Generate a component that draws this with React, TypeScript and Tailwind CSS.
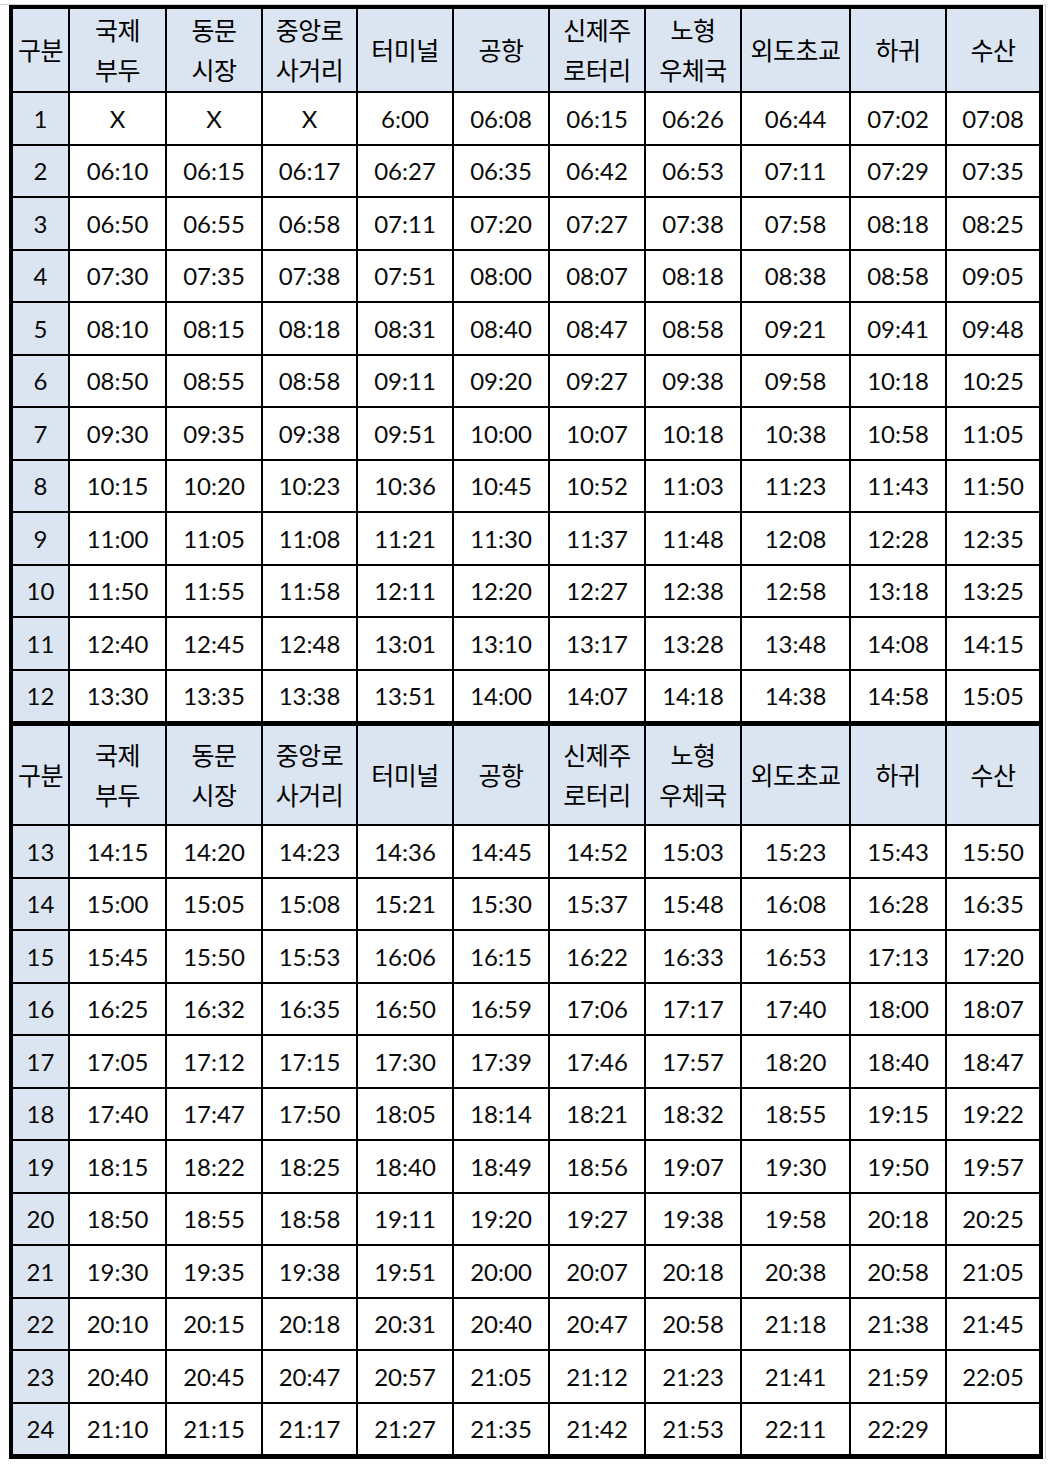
const headers: string[][] = [
  ['구분'],
  ['국제', '부두'],
  ['동문', '시장'],
  ['중앙로', '사거리'],
  ['터미널'],
  ['공항'],
  ['신제주', '로터리'],
  ['노형', '우체국'],
  ['외도초교'],
  ['하귀'],
  ['수산'],
];

const rows: string[][] = [
  ['X', 'X', 'X', '6:00', '06:08', '06:15', '06:26', '06:44', '07:02', '07:08'],
  ['06:10', '06:15', '06:17', '06:27', '06:35', '06:42', '06:53', '07:11', '07:29', '07:35'],
  ['06:50', '06:55', '06:58', '07:11', '07:20', '07:27', '07:38', '07:58', '08:18', '08:25'],
  ['07:30', '07:35', '07:38', '07:51', '08:00', '08:07', '08:18', '08:38', '08:58', '09:05'],
  ['08:10', '08:15', '08:18', '08:31', '08:40', '08:47', '08:58', '09:21', '09:41', '09:48'],
  ['08:50', '08:55', '08:58', '09:11', '09:20', '09:27', '09:38', '09:58', '10:18', '10:25'],
  ['09:30', '09:35', '09:38', '09:51', '10:00', '10:07', '10:18', '10:38', '10:58', '11:05'],
  ['10:15', '10:20', '10:23', '10:36', '10:45', '10:52', '11:03', '11:23', '11:43', '11:50'],
  ['11:00', '11:05', '11:08', '11:21', '11:30', '11:37', '11:48', '12:08', '12:28', '12:35'],
  ['11:50', '11:55', '11:58', '12:11', '12:20', '12:27', '12:38', '12:58', '13:18', '13:25'],
  ['12:40', '12:45', '12:48', '13:01', '13:10', '13:17', '13:28', '13:48', '14:08', '14:15'],
  ['13:30', '13:35', '13:38', '13:51', '14:00', '14:07', '14:18', '14:38', '14:58', '15:05'],
  ['14:15', '14:20', '14:23', '14:36', '14:45', '14:52', '15:03', '15:23', '15:43', '15:50'],
  ['15:00', '15:05', '15:08', '15:21', '15:30', '15:37', '15:48', '16:08', '16:28', '16:35'],
  ['15:45', '15:50', '15:53', '16:06', '16:15', '16:22', '16:33', '16:53', '17:13', '17:20'],
  ['16:25', '16:32', '16:35', '16:50', '16:59', '17:06', '17:17', '17:40', '18:00', '18:07'],
  ['17:05', '17:12', '17:15', '17:30', '17:39', '17:46', '17:57', '18:20', '18:40', '18:47'],
  ['17:40', '17:47', '17:50', '18:05', '18:14', '18:21', '18:32', '18:55', '19:15', '19:22'],
  ['18:15', '18:22', '18:25', '18:40', '18:49', '18:56', '19:07', '19:30', '19:50', '19:57'],
  ['18:50', '18:55', '18:58', '19:11', '19:20', '19:27', '19:38', '19:58', '20:18', '20:25'],
  ['19:30', '19:35', '19:38', '19:51', '20:00', '20:07', '20:18', '20:38', '20:58', '21:05'],
  ['20:10', '20:15', '20:18', '20:31', '20:40', '20:47', '20:58', '21:18', '21:38', '21:45'],
  ['20:40', '20:45', '20:47', '20:57', '21:05', '21:12', '21:23', '21:41', '21:59', '22:05'],
  ['21:10', '21:15', '21:17', '21:27', '21:35', '21:42', '21:53', '22:11', '22:29', ''],
];

function HeaderRow() {
  return (
    <>
      {headers.map((lines, i) => (
        <div
          key={i}
          className="flex flex-col items-center justify-center bg-[#dbe5f1] text-[25px] leading-[40px] tracking-[-0.5px] text-black"
        >
          {lines.map((l) => (
            <span key={l}>{l}</span>
          ))}
        </div>
      ))}
    </>
  );
}

function Section({ start, headerH }: { start: number; headerH: 'first' | 'second' }) {
  const data = rows.slice(start, start + 12);
  return (
    <div
      className={
        headerH === 'first'
          ? 'grid grid-cols-[55px_95px_94px_93px_94px_94px_94px_94px_107px_94px_92px] grid-rows-[82px_repeat(12,50.5px)] gap-[2px]'
          : 'grid grid-cols-[55px_95px_94px_93px_94px_94px_94px_94px_107px_94px_92px] grid-rows-[98px_repeat(12,50.5px)] gap-[2px]'
      }
    >
      <HeaderRow />
      {data.map((r, ri) => (
        <div key={ri} className="contents">
          <div className="flex items-center justify-center bg-[#dbe5f1] pt-[1px]">{start + ri + 1}</div>
          {r.map((v, ci) => (
            <div key={ci} className="flex items-center justify-center bg-white pt-[1px]">
              {v}
            </div>
          ))}
        </div>
      ))}
    </div>
  );
}

export default function App() {
  return (
    <div className="min-h-[1464px] bg-white pt-[4px] font-['Lato','Noto_Sans_CJK_KR',sans-serif] text-[24px] text-[#0a0a0a]">
      <div className="w-[1046px] border-t border-r border-[#cfcfcf]">
        <div className="ml-[9px] flex w-[1034px] flex-col gap-[5px] bg-black pt-[4px] pr-[4px] pb-[5px] pl-[4px]">
          <Section start={0} headerH="first" />
          <Section start={12} headerH="second" />
        </div>
      </div>
    </div>
  );
}
